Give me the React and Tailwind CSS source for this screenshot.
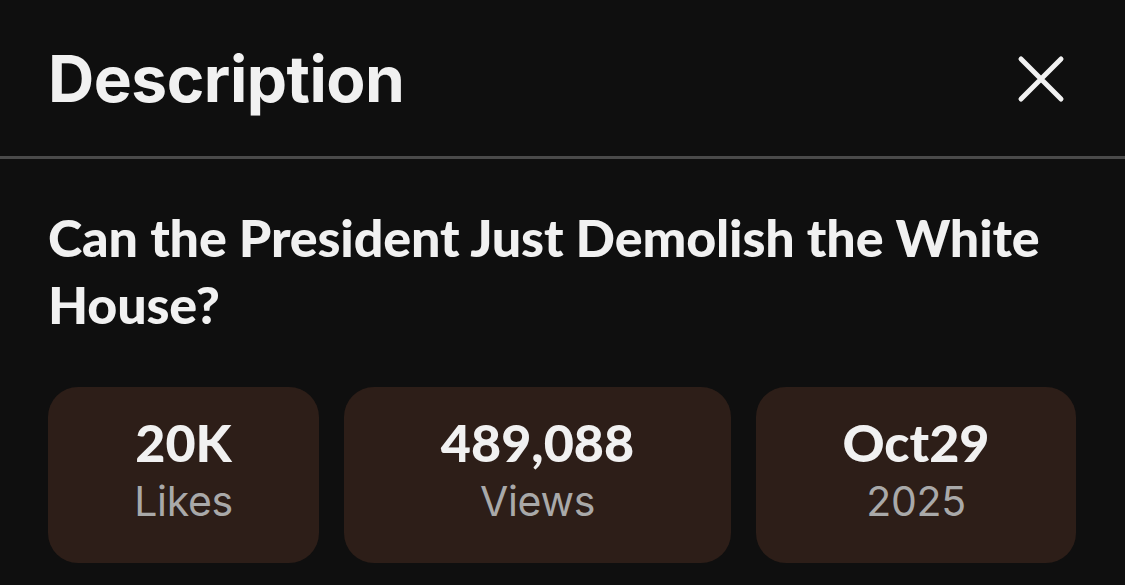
export default function App() {
  const stats = [
    { value: "20K", label: "Likes", width: "w-[271px]" },
    { value: "489,088", label: "Views", width: "w-[387px]" },
    { value: "Oct29", label: "2025", width: "w-[320px]" },
  ];

  return (
    <div className="min-h-[585px] w-full bg-[#0f0f0f] text-[#f1f1f1]">
      <div className="flex items-center justify-between pl-[48px] pr-[60px] pt-[47px] pb-[45px]">
        <h2 className="font-['Inter',sans-serif] text-[64px] font-bold leading-[64px] tracking-[-0.5px]">
          Description
        </h2>
        <button aria-label="Close description" className="flex h-[48px] w-[48px] items-center justify-center">
          <svg width="48" height="48" viewBox="0 0 48 48" fill="none">
            <path
              d="M4 4 L44 44 M44 4 L4 44"
              stroke="#f1f1f1"
              strokeWidth="5"
              strokeLinecap="round"
            />
          </svg>
        </button>
      </div>
      <div className="h-[3px] bg-[#4a4a4a]" />
      <div className="px-[48px] pt-[45px]">
        <h1 className="font-['Lato',sans-serif] text-[52px] font-black leading-[67px] tracking-[-0.15px]">
          <span className="whitespace-nowrap">Can the President Just Demolish the White</span>
          <br />
          House?
        </h1>
        <div className="mt-[49px] flex gap-[25px]">
          {stats.map((s) => (
            <div
              key={s.label}
              className={`flex h-[176px] shrink-0 flex-col items-center rounded-[30px] bg-[#2d1e18] pt-[27px] ${s.width}`}
            >
              <span className="font-['Lato',sans-serif] text-[52px] font-black leading-[56px]">
                {s.value}
              </span>
              <span className="mt-[7px] font-['Inter',sans-serif] text-[41px] leading-[48px] tracking-[-0.3px] text-[#a9a9a9]">
                {s.label}
              </span>
            </div>
          ))}
        </div>
      </div>
    </div>
  );
}
